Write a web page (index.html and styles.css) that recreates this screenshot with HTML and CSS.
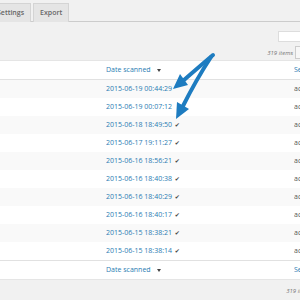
FILE: index.html
```html
<!DOCTYPE html>
<html lang="en">
<head>
    <meta charset="UTF-8">
    <meta name="viewport" content="width=device-width, initial-scale=1.0">
    <title>Scan log</title>
    <link rel="stylesheet" href="styles.css">
</head>
<body>
    <div class="wrap">
        <nav class="tabs">
            <span class="tab">Settings</span>
            <span class="tab">Export</span>
        </nav>

        <div class="search-row">
            <input class="search" type="text">
        </div>
        <div class="tablenav">
            <span class="count">319 items</span>
            <span class="page-btn"></span>
        </div>

        <div class="table">
            <div class="row head">
                <div class="cell"></div>
                <div class="cell link">Date scanned <span class="sort"></span></div>
                <div class="cell link">Seen by</div>
            </div>
            <div class="row alt">
                <div class="cell"></div>
                <div class="cell link">2015-06-19 00:44:29</div>
                <div class="cell">accepted</div>
            </div>
            <div class="row">
                <div class="cell"></div>
                <div class="cell link">2015-06-19 00:07:12</div>
                <div class="cell">accepted</div>
            </div>
            <div class="row alt">
                <div class="cell"></div>
                <div class="cell link">2015-06-18 18:49:50 <span class="check">&#10004;</span></div>
                <div class="cell">accepted</div>
            </div>
            <div class="row">
                <div class="cell"></div>
                <div class="cell link">2015-06-17 19:11:27 <span class="check">&#10004;</span></div>
                <div class="cell">accepted</div>
            </div>
            <div class="row alt">
                <div class="cell"></div>
                <div class="cell link">2015-06-16 18:56:21 <span class="check">&#10004;</span></div>
                <div class="cell">accepted</div>
            </div>
            <div class="row">
                <div class="cell"></div>
                <div class="cell link">2015-06-16 18:40:38 <span class="check">&#10004;</span></div>
                <div class="cell">accepted</div>
            </div>
            <div class="row alt">
                <div class="cell"></div>
                <div class="cell link">2015-06-16 18:40:29 <span class="check">&#10004;</span></div>
                <div class="cell">accepted</div>
            </div>
            <div class="row">
                <div class="cell"></div>
                <div class="cell link">2015-06-16 18:40:17 <span class="check">&#10004;</span></div>
                <div class="cell">accepted</div>
            </div>
            <div class="row alt">
                <div class="cell"></div>
                <div class="cell link">2015-06-15 18:38:21 <span class="check">&#10004;</span></div>
                <div class="cell">accepted</div>
            </div>
            <div class="row">
                <div class="cell"></div>
                <div class="cell link">2015-06-15 18:38:14 <span class="check">&#10004;</span></div>
                <div class="cell">accepted</div>
            </div>
            <div class="row foot">
                <div class="cell"></div>
                <div class="cell link">Date scanned <span class="sort"></span></div>
                <div class="cell link">Seen by</div>
            </div>
        </div>

        <div class="tablenav bottom">
            <span class="count">319 items</span>
        </div>
    </div>

    <!-- annotation arrows drawn over the table -->
    <svg class="arrows" width="300" height="300" viewBox="0 0 300 300">
        <g stroke="#1e7cc0" stroke-width="4" stroke-linecap="round" fill="none">
            <path d="M213 55 Q200 66 184 80"/>
            <path d="M211 57 Q196 80 183 106"/>
        </g>
        <g fill="#1e7cc0">
            <polygon points="173,89 188,85 180,74"/>
            <polygon points="176,119 189,109 177,102"/>
        </g>
    </svg>
</body>
</html>
```

FILE: styles.css
```css
* {
    box-sizing: border-box;
    margin: 0;
    padding: 0;
}

body {
    position: relative;
    width: 300px;
    height: 300px;
    overflow: hidden;
    background-color: #f1f1f1;
    font-family: 'Open Sans', 'Noto Sans', sans-serif;
    font-size: 7px;
    color: #555;
}

.wrap {
    margin: 0 -12px 0 -10px;
}

/* Tabs */
.tabs {
    display: flex;
    gap: 2px;
    padding-top: 3px;
    border-bottom: 1px solid #ccc;
}

.tab {
    padding: 0 6px;
    line-height: 18px;
    font-weight: 600;
    color: #666;
    background: #e5e5e5;
    border: 1px solid #d4d4d4;
    border-bottom: none;
    margin-bottom: -1px;
}

/* Search and pagination */
.search-row {
    display: flex;
    justify-content: flex-end;
    padding-top: 9px;
}

.search {
    width: 34px;
    height: 11px;
    background: #fff;
    border: 1px solid #ddd;
    outline: none;
}

.tablenav {
    display: flex;
    justify-content: flex-end;
    align-items: center;
    gap: 2px;
    height: 13px;
    margin-top: 4px;
}

.count {
    font-size: 6px;
    font-style: italic;
    color: #777;
}

.page-btn {
    width: 17px;
    height: 13px;
    background: #f7f7f7;
    border: 1px solid #ccc;
}

.tablenav.bottom {
    height: 12px;
    margin-top: 5px;
}

/* Table */
.table {
    margin-top: 1px;
    background: #fff;
    border: 1px solid #e5e5e5;
}

.row {
    display: grid;
    grid-template-columns: 115px 188px 1fr;
    align-items: center;
    height: 18px;
    white-space: nowrap;
}

.row.alt {
    background: #f9f9f9;
}

.row.head {
    border-bottom: 1px solid #e1e1e1;
    height: 19px;
}

.row.foot {
    border-top: 1px solid #e1e1e1;
    height: 19px;
}

.cell {
    overflow: hidden;
    line-height: 18px;
}

.link {
    color: #2a7cb3;
}

.check {
    font-family: 'DejaVu Sans', sans-serif;
    font-size: 6px;
    color: #444;
    margin-left: 1px;
}

.sort {
    display: inline-block;
    width: 0;
    height: 0;
    margin-left: 5px;
    vertical-align: middle;
    border-top: 3px solid #444;
    border-left: 2.5px solid transparent;
    border-right: 2.5px solid transparent;
}

.arrows {
    position: absolute;
    left: 0;
    top: 0;
    pointer-events: none;
}
```
